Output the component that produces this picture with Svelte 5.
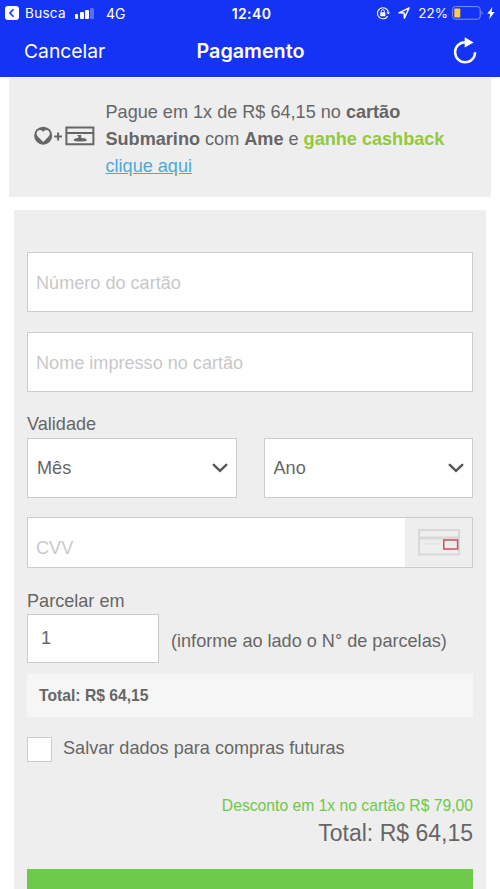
<script lang="ts">
	let cardNumber = $state('');
	let cardName = $state('');
	let cvv = $state('');
	let installments = $state('1');
	let saveCard = $state(false);

	const signal = [5, 7, 9, 11];
	const selects = ['Mês', 'Ano'];
</script>

<div class="screen">
	<header class="header">
		<div class="status">
			<div class="status-left">
				<svg class="back" width="14" height="14" viewBox="0 0 14 14">
					<rect width="14" height="14" rx="3" fill="#fff" />
					<path d="M8.6 3.2 4.9 7l3.7 3.8" fill="none" stroke="#1433f5" stroke-width="1.6" />
				</svg>
				<span class="busca">Busca</span>
				<span class="signal">
					{#each signal as height, i}
						<i class:off={i === 3} style="height: {height}px"></i>
					{/each}
				</span>
				<span class="network">4G</span>
			</div>
			<span class="time">12:40</span>
			<div class="status-right">
				<svg width="14" height="14" viewBox="0 0 14 14" fill="none" stroke="#fff">
					<path d="M11.7 10.1A5.5 5.5 0 1 1 12.3 6" stroke-width="1.1" />
					<path d="m10.4 6.2 1.9 2.3 1.7-2.3z" fill="#fff" stroke="none" />
					<rect x="4.2" y="6.2" width="5.2" height="4" rx=".5" fill="#fff" stroke="none" />
					<path d="M5.3 6.5V5.2a1.5 1.5 0 0 1 3 0v1.3" stroke-width="1" />
				</svg>
				<svg class="location" width="12" height="12" viewBox="0 0 12 12">
					<path d="M.9 5.8 11.1.9 6.4 11.1 6.1 6z" fill="none" stroke="#fff" stroke-width="1.4" stroke-linejoin="round" />
				</svg>
				<span class="percent">22%</span>
				<svg class="battery" width="32" height="14" viewBox="0 0 32 14">
					<rect x=".6" y=".6" width="27.6" height="12.6" rx="2.8" fill="none" stroke="#8492fa" stroke-width="1" />
					<rect x="2.3" y="2.4" width="6" height="9" rx="1" fill="#fccb4c" />
					<path d="M29.6 4.7q2.2 2.2 0 4.4z" fill="#8492fa" />
				</svg>
				<svg class="bolt" width="8" height="12" viewBox="0 0 8 12">
					<path d="M5.4 0 .3 6.7h2.9L2.3 12 7.7 5H4.6z" fill="#fff" />
				</svg>
			</div>
		</div>
		<nav class="nav">
			<span class="cancel">Cancelar</span>
			<h1>Pagamento</h1>
			<svg class="reload" width="24" height="28" viewBox="0 0 24 28">
				<path d="M12 5.2a10 10 0 1 0 10.1 10" fill="none" stroke="#fff" stroke-width="2.5" />
				<path d="m11.7.3 8.9 5.1-8.9 5.1z" fill="#fff" />
			</svg>
		</nav>
	</header>

	<section class="promo">
		<svg class="promo-icon" width="61" height="20" viewBox="0 0 61 20">
			<circle cx="9.2" cy="9.7" r="9" fill="#666" />
			<path d="M9.2 16 3.8 10.5C1.2 7.7 3.3 4 6 4c1.5 0 2.6.8 3.2 1.9.6-1.1 1.7-1.9 3.2-1.9 2.7 0 4.8 3.7 2.2 6.5z" fill="#eee" />
			<path d="M20.2 10.5h7.8M24.1 6.6v7.8" stroke="#666" stroke-width="2" />
			<path d="M32.4 1.5h27v16.8h-27zM32.4 7h27" fill="none" stroke="#666" stroke-width="2" />
			<path d="M39.7 14.2q0-2 4.6-2.2v-2h-.8V9h3.7v3q5.6.1 5.6 2.2-.4 1.2-6.5 1.2t-6.6-1.2z" fill="#666" />
		</svg>
		<p>
			Pague em 1x de R$ 64,15 no <b>cartão</b><br />
			<b>Submarino</b> com <b>Ame</b> e <b class="cashback">ganhe cashback</b><br />
			<a href="#cashback">clique aqui</a>
		</p>
	</section>

	<main class="form">
		<input class="field" placeholder="Número do cartão" bind:value={cardNumber} />
		<input class="field" placeholder="Nome impresso no cartão" bind:value={cardName} />

		<span class="label">Validade</span>
		<div class="selects">
			{#each selects as name}
				<button class="select">
					<span>{name}</span>
					<svg width="16" height="10" viewBox="0 0 16 10">
						<path d="m1.7 1.8 6.3 6 6.3-6" fill="none" stroke="#555" stroke-width="2.4" stroke-linecap="round" />
					</svg>
				</button>
			{/each}
		</div>

		<div class="cvv">
			<input placeholder="CVV" bind:value={cvv} />
			<span class="cvv-hint">
				<svg width="42" height="27" viewBox="0 0 42 27" fill="none">
					<path d="M1 1h40v24.5H1z" stroke="#d8d8d8" stroke-width="2" />
					<path d="M1 9h40" stroke="#d8d8d8" stroke-width="3" />
					<path d="M5 15h17" stroke="#dcdcdc" />
					<rect x="25.8" y="11" width="13.8" height="9" fill="#eee" stroke="#d0505f" stroke-width="1.5" />
					<path d="M30 15h6" stroke="#e0dcdc" />
				</svg>
			</span>
		</div>

		<span class="label parcel-label">Parcelar em</span>
		<div class="parcels">
			<input bind:value={installments} />
			<span>(informe ao lado o N° de parcelas)</span>
		</div>

		<div class="subtotal">Total: R$ 64,15</div>

		<label class="save">
			<input type="checkbox" bind:checked={saveCard} />
			<span>Salvar dados para compras futuras</span>
		</label>

		<div class="discount">Desconto em 1x no cartão R$ 79,00</div>
		<div class="total">Total: R$ 64,15</div>
		<button class="submit" aria-label="Pagar"></button>
	</main>
</div>

<style>
	:global(body) {
		background: #fff;
		overflow: hidden;
	}

	.screen {
		width: 500px;
		height: 889px;
		overflow: hidden;
		font-family: 'Liberation Sans', Arial, sans-serif;
		font-size: 18.1px;
		color: #666;
	}

	.screen * {
		box-sizing: border-box;
	}

	input,
	button {
		font: inherit;
		color: inherit;
		border-radius: 0;
		outline: none;
	}

	.header {
		height: 77px;
		background: #1433f5;
		color: #fff;
		font-family: Inter, sans-serif;
	}

	.status {
		height: 26px;
		display: grid;
		grid-template-columns: 1fr auto 1fr;
		align-items: center;
		font-size: 13.5px;
	}

	.status-left,
	.status-right {
		display: flex;
		align-items: center;
	}

	.status-left {
		padding-left: 5px;
	}

	.busca {
		margin-left: 6px;
		letter-spacing: 0.3px;
	}

	.signal {
		display: flex;
		align-items: flex-end;
		gap: 1.6px;
		margin-left: 9px;
	}

	.signal i {
		width: 3.6px;
		background: #fff;
		border-radius: 1px;
	}

	.signal .off {
		opacity: 0.3;
	}

	.network {
		margin-left: 12px;
		font-size: 14px;
	}

	.time {
		padding-left: 3px;
		font-weight: 600;
		font-size: 14px;
		letter-spacing: 0.4px;
	}

	.status-right {
		justify-content: flex-end;
		padding-right: 5px;
	}

	.location {
		margin-left: 8px;
	}

	.percent {
		margin-left: 8px;
	}

	.battery {
		margin-left: 4px;
	}

	.bolt {
		margin-left: 3px;
	}

	.nav {
		height: 50px;
		display: grid;
		grid-template-columns: 1fr auto 1fr;
		align-items: center;
		padding: 0 23px 0 24px;
		font-size: 19.3px;
	}

	h1 {
		margin: 0;
		font-size: 19.8px;
		font-weight: 600;
	}

	.reload {
		justify-self: end;
	}

	.promo {
		display: flex;
		align-items: center;
		height: 119px;
		margin: 1px 9px 0;
		padding-left: 25px;
		background: #eee;
	}

	.promo-icon {
		flex: none;
		margin-bottom: 4px;
	}

	.promo p {
		margin: 3px 0 0 10.5px;
		line-height: 27px;
		white-space: nowrap;
	}

	.cashback {
		color: #93c83d;
	}

	a {
		color: #4da9dc;
	}

	.form {
		display: flex;
		flex-direction: column;
		margin: 13px 14px 0;
		padding: 42px 13px 0;
		height: 680px;
		background: #eee;
	}

	.form > * {
		flex: none;
	}

	.field {
		width: 100%;
		height: 60px;
		margin-bottom: 20px;
		padding: 2px 8px 0;
		border: 1px solid #ccc;
		background: #fff;
	}

	input::placeholder {
		color: #c8c8c8;
		opacity: 1;
	}

	.label {
		line-height: 24px;
	}

	.selects {
		display: grid;
		grid-template-columns: 1fr 1fr;
		gap: 27px;
		margin-top: 2px;
	}

	.select {
		display: flex;
		align-items: center;
		justify-content: space-between;
		height: 60px;
		padding: 0 8px 0 9px;
		border: 1px solid #ccc;
		background: #fff;
	}

	.cvv {
		display: flex;
		height: 51px;
		margin-top: 19px;
		border: 1px solid #ccc;
		background: #fff;
	}

	.cvv input {
		flex: 1;
		min-width: 0;
		padding: 12px 8px 0;
		border: 0;
	}

	.cvv-hint {
		display: flex;
		align-items: center;
		justify-content: center;
		width: 67px;
		background: #eee;
	}

	.parcel-label {
		margin-top: 21px;
	}

	.parcels {
		display: flex;
		align-items: center;
		gap: 12px;
		margin-top: 1px;
	}

	.parcels input {
		width: 132px;
		height: 49px;
		padding: 0 13px;
		border: 1px solid #ccc;
		background: #fff;
	}

	.parcels span {
		padding-top: 5px;
	}

	.subtotal {
		height: 43px;
		margin-top: 11px;
		padding-left: 12px;
		background: #f6f6f6;
		font-size: 15.7px;
		font-weight: bold;
		line-height: 43px;
	}

	.save {
		display: flex;
		align-items: center;
		gap: 11px;
		margin-top: 20px;
	}

	.save input {
		appearance: none;
		width: 25px;
		height: 25px;
		margin: 0;
		border: 1px solid #ccc;
		background: #fff;
	}

	.save span {
		margin-top: -2px;
	}

	.discount {
		margin-top: 33px;
		color: #6cc949;
		font-size: 15.7px;
		line-height: 22px;
		text-align: right;
	}

	.total {
		font-size: 23px;
		line-height: 32px;
		text-align: right;
	}

	.submit {
		height: 60px;
		margin-top: 20px;
		border: 0;
		background: #6cc949;
	}
</style>
